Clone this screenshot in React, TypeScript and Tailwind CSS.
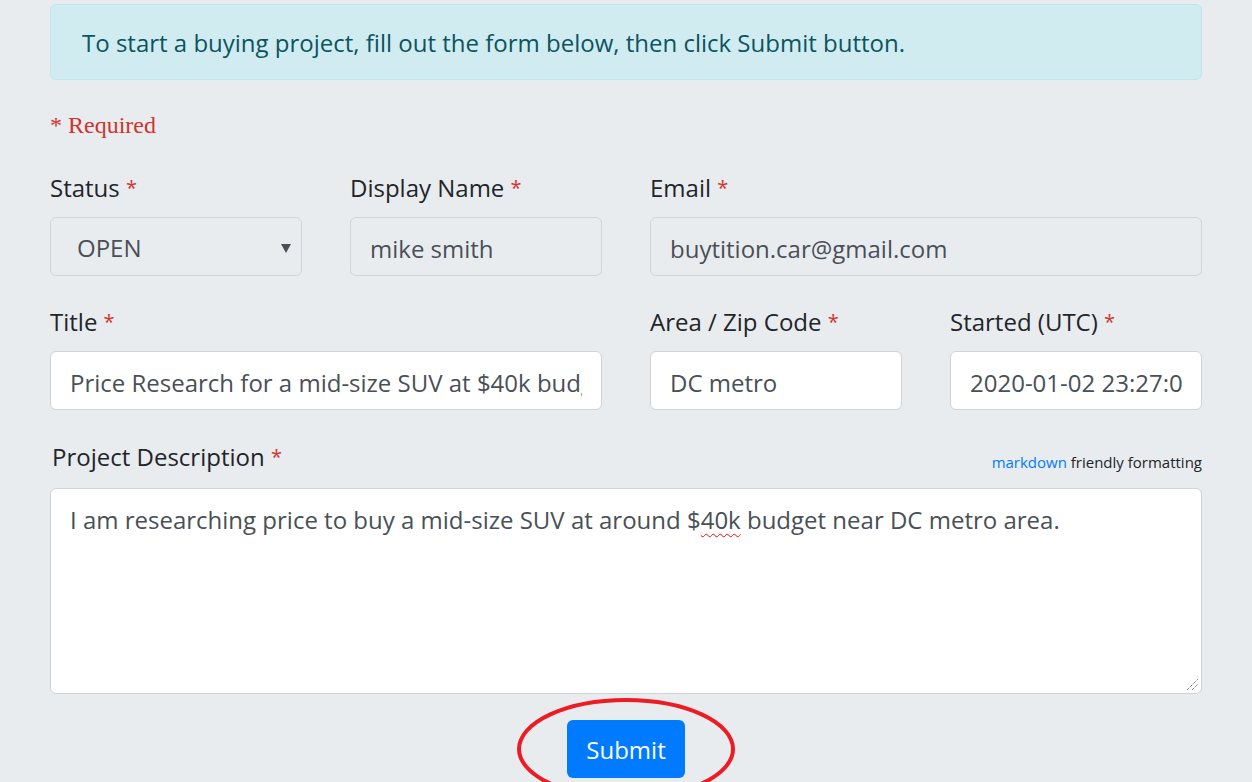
import React from 'react';

const font = { fontFamily: '"Open Sans", "Noto Sans", sans-serif' };

function Req() {
  return <span className="text-[#d0342c] text-[20px] align-top">*</span>;
}

function Label({ text }: { text: string }) {
  return (
    <div className="h-9 leading-9 text-[24px] text-[#212529] mb-[11px] whitespace-nowrap">
      {text} <Req />
    </div>
  );
}

function Field({ value, disabled }: { value: string; disabled?: boolean }) {
  return (
    <input
      readOnly
      value={value}
      style={font}
      className={`w-full h-[59px] px-[19px] pt-[3px] text-[24px] text-[#495057] rounded-[6px] border-[1.5px] border-[#ced4da] outline-none ${
        disabled ? 'bg-[#e9ecef]' : 'bg-white'
      }`}
    />
  );
}

export default function App() {
  return (
    <div className="min-h-[782px] bg-[#e9ecef] overflow-hidden" style={font}>
      <div className="w-[1152px] ml-[50px] pt-[4px]">
        {/* Info alert */}
        <div className="h-[76px] flex items-center px-[31px] pt-[2px] rounded-[6px] bg-[#d1ecf1] border-[1.5px] border-[#bee5eb] text-[#0c5460] text-[24px]">
          To start a buying project, fill out the form below, then click Submit button.
        </div>

        <div
          className="mt-[27px] h-9 leading-9 text-[24px] text-[#d0342c]"
          style={{ fontFamily: '"Liberation Serif", serif' }}
        >
          * Required
        </div>

        {/* Row 1 */}
        <div className="grid grid-cols-4 gap-x-[48px] mt-[27px]">
          <div>
            <Label text="Status" />
            <div className="h-[59px] flex items-center justify-between pl-[26px] pr-[10px] pt-[3px] rounded-[6px] border-[1.5px] border-[#ced4da] bg-[#e9ecef] text-[24px] text-[#495057]">
              <span>OPEN</span>
              <svg width="10" height="9" viewBox="0 0 10 9">
                <path d="M0 0 L10 0 L5 9 Z" fill="#495057" />
              </svg>
            </div>
          </div>
          <div>
            <Label text="Display Name" />
            <Field value="mike smith" disabled />
          </div>
          <div className="col-span-2">
            <Label text="Email" />
            <Field value="buytition.car@gmail.com" disabled />
          </div>
        </div>

        {/* Row 2 */}
        <div className="grid grid-cols-4 gap-x-[48px] mt-[28px]">
          <div className="col-span-2">
            <Label text="Title" />
            <Field value="Price Research for a mid-size SUV at $40k budget" />
          </div>
          <div>
            <Label text="Area / Zip Code" />
            <Field value="DC metro" />
          </div>
          <div>
            <Label text="Started (UTC)" />
            <Field value="2020-01-02 23:27:07" />
          </div>
        </div>

        {/* Description */}
        <div className="mt-[29px] flex items-end justify-between mb-[13px]">
          <div className="h-9 leading-9 text-[24px] text-[#212529] pl-[2px]">
            Project Description <Req />
          </div>
          <div className="text-[15px] text-[#212529] pb-[2px]">
            <span className="text-[#007bff]">markdown</span> friendly formatting
          </div>
        </div>
        <div className="relative h-[206px] rounded-[6px] border-[1.5px] border-[#ced4da] bg-white px-[19px] pt-[13px] text-[24px] leading-9 text-[#495057]">
          I am researching price to buy a mid-size SUV at around $
          <span className="underline decoration-wavy decoration-[#e01010] decoration-1 underline-offset-4">40k</span>{' '}
          budget near DC metro area.
          <svg className="absolute right-[2px] bottom-[2px]" width="13" height="13" viewBox="0 0 13 13">
            <path d="M1 12 L12 1 M6 12 L12 6" stroke="#555" strokeWidth="1" strokeDasharray="1 1" />
          </svg>
        </div>

        {/* Submit */}
        <div className="relative flex justify-center mt-[26px]">
          <button className="h-[58px] px-[19px] pt-[2px] rounded-[6px] bg-[#007bff] text-white text-[24px]" style={font}>
            Submit
          </button>
          <svg className="absolute left-[466px] top-[-22px] overflow-visible" width="220" height="100" viewBox="0 0 220 100">
            <ellipse cx="110" cy="51" rx="107" ry="49" fill="none" stroke="#ed1c24" strokeWidth="4" />
          </svg>
        </div>
      </div>
    </div>
  );
}
